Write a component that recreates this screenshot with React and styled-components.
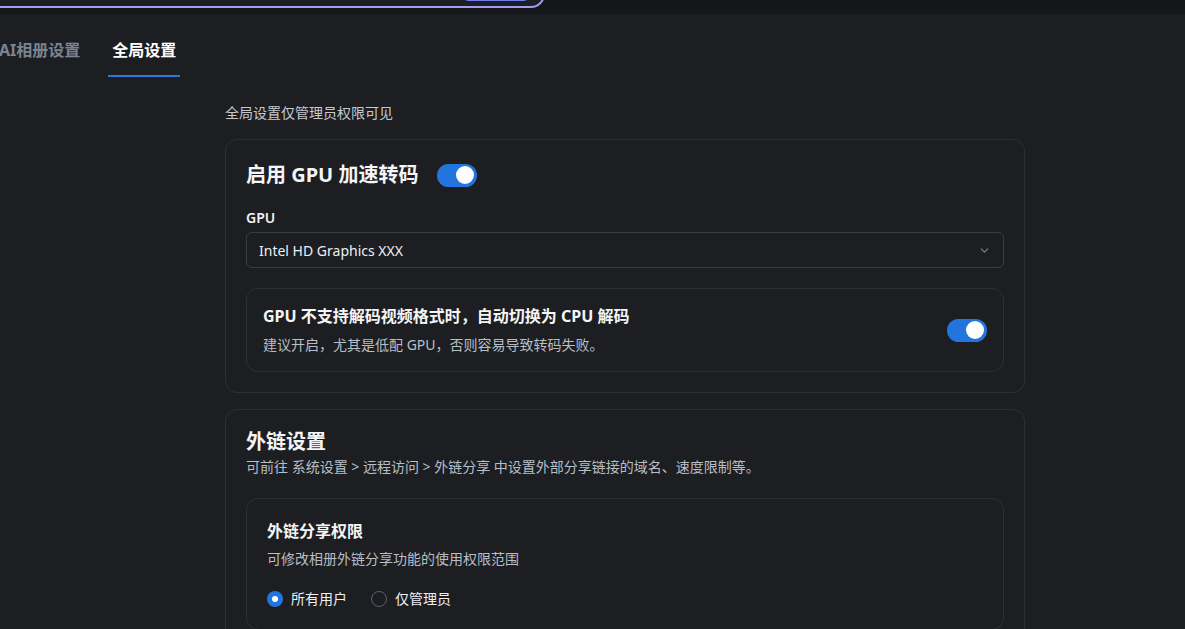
import React from 'react'
import styled, { createGlobalStyle } from 'styled-components'
import { ChevronDown } from 'lucide-react'

const GlobalStyle = createGlobalStyle`
  html, body {
    margin: 0;
    padding: 0;
    background: #1c1e22;
  }
  body {
    font-family: 'Noto Sans', 'Noto Sans CJK SC', sans-serif;
    color: #eef0f3;
  }
  * { box-sizing: border-box; }
`

//STYLED COMPONENTS
const Page = styled.div`
  min-height: 100vh;
  background: #1c1e22;
`

const TopBar = styled.div`
  height: 14px;
  background: #141619;
  display: flex;
  align-items: flex-end;
  padding-bottom: 6px;
  overflow: hidden;
`

const SearchBox = styled.div`
  width: 560px;
  height: 36px;
  margin-left: -15px;
  flex-shrink: 0;
  background: #1c1e22;
  border: 2px solid #a29cf2;
  border-radius: 14px;
  display: flex;
  justify-content: flex-end;
  align-items: flex-end;
  padding: 0 12px 5px 0;
`

const SearchButton = styled.div`
  width: 70px;
  height: 26px;
  border-radius: 8px;
  background: #1c1e22;
  border-bottom: 2px solid #6f7ff2;
`

const TabBar = styled.div`
  display: flex;
  gap: 24px;
  margin-left: -5px;
  padding-top: 22px;
`

const Tab = styled.div`
  padding: 0 4px 11px;
  font-size: 16px;
  font-weight: 700;
  line-height: 28px;
  color: ${p => (p.active ? '#ffffff' : '#7b8491')};
  border-bottom: 2px solid ${p => (p.active ? '#2a78e0' : 'transparent')};
`

const Content = styled.div`
  width: 800px;
  margin-left: 225px;
  padding-top: 26px;
  display: flex;
  flex-direction: column;
  gap: 16px;
`

const Notice = styled.div`
  font-size: 14px;
  line-height: 20px;
  color: #c6cad0;
`

const Card = styled.section`
  border: 1px solid #2c3036;
  border-radius: 12px;
  padding: ${p => p.pad || '20px 20px 20px'};
  display: flex;
  flex-direction: column;
`

const TitleRow = styled.div`
  display: flex;
  align-items: center;
  gap: 19px;
`

const CardTitle = styled.h2`
  margin: 0;
  font-size: 20px;
  font-weight: 700;
  line-height: 30px;
  color: #f4f5f7;
`

const Switch = styled.div`
  width: 40px;
  height: 23px;
  border-radius: 12px;
  background: #2474de;
  display: flex;
  align-items: center;
  justify-content: flex-end;
  padding-right: 3px;
  flex-shrink: 0;
  &::after {
    content: '';
    width: 18px;
    height: 18px;
    border-radius: 50%;
    background: #ffffff;
  }
`

const Label = styled.div`
  margin-top: 18px;
  font-size: 14px;
  font-weight: 600;
  line-height: 20px;
  color: #eef0f3;
`

const Select = styled.div`
  margin-top: 4px;
  height: 36px;
  border: 1px solid #393e45;
  border-radius: 6px;
  display: flex;
  align-items: center;
  justify-content: space-between;
  padding: 0 12px 0 12px;
  font-size: 14px;
  color: #eef0f3;
  svg { color: #7d8591; }
`

const SubCard = styled.div`
  margin-top: ${p => p.mt || '20px'};
  border: 1px solid #2c3036;
  border-radius: 12px;
  padding: ${p => p.pad || '16px'};
  display: flex;
  align-items: center;
  justify-content: space-between;
`

const SubBody = styled.div`
  display: flex;
  flex-direction: column;
`

const SubTitle = styled.div`
  font-size: 16px;
  font-weight: 700;
  line-height: 22px;
  color: #f4f5f7;
`

const Desc = styled.div`
  margin-top: ${p => p.mt || '8px'};
  font-size: 14px;
  line-height: 20px;
  color: #b8bec6;
`

const RadioGroup = styled.div`
  display: flex;
  gap: 24px;
  margin-top: 20px;
`

const RadioItem = styled.label`
  display: flex;
  align-items: center;
  gap: 8px;
  font-size: 14px;
  line-height: 20px;
  color: #eef0f3;
`

const RadioDot = styled.span`
  width: 16px;
  height: 16px;
  border-radius: 50%;
  box-sizing: border-box;
  display: flex;
  align-items: center;
  justify-content: center;
  background: ${p => (p.checked ? '#2474de' : 'transparent')};
  border: ${p => (p.checked ? 'none' : '1px solid #5b616a')};
  &::after {
    content: '';
    width: 6px;
    height: 6px;
    border-radius: 50%;
    background: ${p => (p.checked ? '#ffffff' : 'transparent')};
  }
`

const App = () => {
  return (
    <>
      <GlobalStyle />
      <Page>
        <TopBar>
          <SearchBox>
            <SearchButton />
          </SearchBox>
        </TopBar>

        <TabBar>
          <Tab>AI相册设置</Tab>
          <Tab active>全局设置</Tab>
        </TabBar>

        <Content>
          <Notice>全局设置仅管理员权限可见</Notice>

          <Card>
            <TitleRow>
              <CardTitle>启用 GPU 加速转码</CardTitle>
              <Switch />
            </TitleRow>
            <Label>GPU</Label>
            <Select>
              Intel HD Graphics XXX
              <ChevronDown size={13} strokeWidth={2} />
            </Select>
            <SubCard>
              <SubBody>
                <SubTitle>GPU 不支持解码视频格式时，自动切换为 CPU 解码</SubTitle>
                <Desc>建议开启，尤其是低配 GPU，否则容易导致转码失败。</Desc>
              </SubBody>
              <Switch />
            </SubCard>
          </Card>

          <Card pad="17px 20px 20px">
            <CardTitle>外链设置</CardTitle>
            <Desc mt="0px">可前往 系统设置 &gt; 远程访问 &gt; 外链分享 中设置外部分享链接的域名、速度限制等。</Desc>
            <SubCard mt="21px" pad="21px 20px 20px">
              <SubBody>
                <SubTitle>外链分享权限</SubTitle>
                <Desc mt="7px">可修改相册外链分享功能的使用权限范围</Desc>
                <RadioGroup>
                  <RadioItem><RadioDot checked />所有用户</RadioItem>
                  <RadioItem><RadioDot />仅管理员</RadioItem>
                </RadioGroup>
              </SubBody>
            </SubCard>
          </Card>
        </Content>
      </Page>
    </>
  )
}

export default App
